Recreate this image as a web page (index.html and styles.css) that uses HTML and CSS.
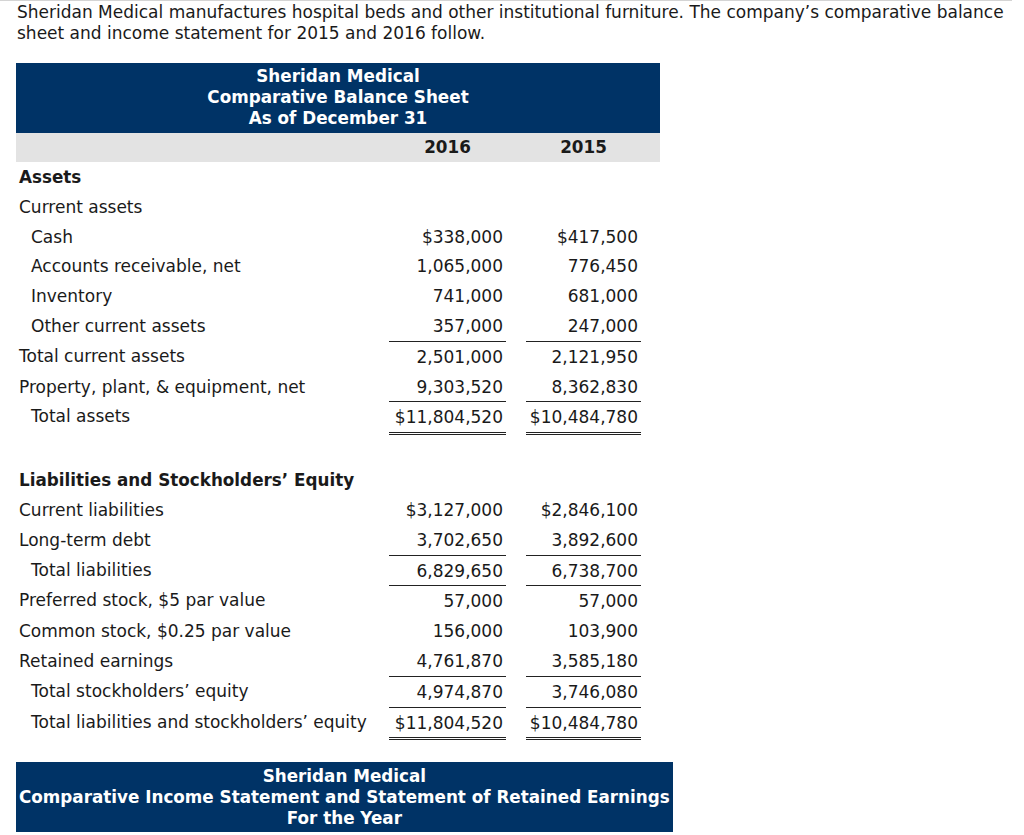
FILE: index.html
```html
<!DOCTYPE html>
<html lang="en">
<head>
<meta charset="utf-8">
<title>Sheridan Medical</title>
<link rel="stylesheet" href="styles.css">
</head>
<body>
<div class="page">
  <p class="intro">Sheridan Medical manufactures hospital beds and other institutional furniture. The company’s comparative balance sheet and income statement for 2015 and 2016 follow.</p>

  <section class="sheet">
    <div class="title-bar">
      <div>Sheridan Medical</div>
      <div>Comparative Balance Sheet</div>
      <div>As of December 31</div>
    </div>
    <div class="row years">
      <span></span><span class="val">2016</span><span></span><span class="val">2015</span><span></span>
    </div>

    <div class="row"><span class="label bold">Assets</span><span class="val"></span><span></span><span class="val"></span><span></span></div>
    <div class="row"><span class="label">Current assets</span><span class="val"></span><span></span><span class="val"></span><span></span></div>
    <div class="row"><span class="label sub">Cash</span><span class="val">$338,000</span><span></span><span class="val">$417,500</span><span></span></div>
    <div class="row"><span class="label sub">Accounts receivable, net</span><span class="val">1,065,000</span><span></span><span class="val">776,450</span><span></span></div>
    <div class="row"><span class="label sub">Inventory</span><span class="val">741,000</span><span></span><span class="val">681,000</span><span></span></div>
    <div class="row"><span class="label sub">Other current assets</span><span class="val">357,000</span><span></span><span class="val">247,000</span><span></span></div>
    <div class="row"><span class="label">Total current assets</span><span class="val rule">2,501,000</span><span></span><span class="val rule">2,121,950</span><span></span></div>
    <div class="row"><span class="label">Property, plant, &amp; equipment, net</span><span class="val">9,303,520</span><span></span><span class="val">8,362,830</span><span></span></div>
    <div class="row"><span class="label sub">Total assets</span><span class="val rule dbl">$11,804,520</span><span></span><span class="val rule dbl">$10,484,780</span><span></span></div>

    <div class="spacer"></div>

    <div class="row"><span class="label bold">Liabilities and Stockholders’ Equity</span><span class="val"></span><span></span><span class="val"></span><span></span></div>
    <div class="row"><span class="label">Current liabilities</span><span class="val">$3,127,000</span><span></span><span class="val">$2,846,100</span><span></span></div>
    <div class="row"><span class="label">Long-term debt</span><span class="val">3,702,650</span><span></span><span class="val">3,892,600</span><span></span></div>
    <div class="row"><span class="label sub">Total liabilities</span><span class="val rule">6,829,650</span><span></span><span class="val rule">6,738,700</span><span></span></div>
    <div class="row"><span class="label">Preferred stock, $5 par value</span><span class="val rule">57,000</span><span></span><span class="val rule">57,000</span><span></span></div>
    <div class="row"><span class="label">Common stock, $0.25 par value</span><span class="val">156,000</span><span></span><span class="val">103,900</span><span></span></div>
    <div class="row"><span class="label">Retained earnings</span><span class="val">4,761,870</span><span></span><span class="val">3,585,180</span><span></span></div>
    <div class="row"><span class="label sub">Total stockholders’ equity</span><span class="val rule">4,974,870</span><span></span><span class="val rule">3,746,080</span><span></span></div>
    <div class="row"><span class="label sub">Total liabilities and stockholders’ equity</span><span class="val rule dbl">$11,804,520</span><span></span><span class="val rule dbl">$10,484,780</span><span></span></div>
  </section>

  <section class="sheet income">
    <div class="title-bar">
      <div>Sheridan Medical</div>
      <div>Comparative Income Statement and Statement of Retained Earnings</div>
      <div>For the Year</div>
    </div>
  </section>
</div>
</body>
</html>
```

FILE: styles.css
```css
* { box-sizing: border-box; }

html, body {
  margin: 0;
  padding: 0;
  background: #ffffff;
}

body {
  font-family: "DejaVu Sans", Verdana, sans-serif;
  font-size: 17px;
  color: #1a1a1a;
}

.page {
  width: 1024px;
  padding: 0 6px 0 16px;
  min-height: 835px;
}

.intro {
  margin: 0 6px 19px -16px;
  padding: 1px 0 0 17px;
  border-top: 1px solid #d4d4d4;
  line-height: 21px;
}

.sheet {
  width: 644px;
}

.title-bar {
  background: #003366;
  color: #ffffff;
  font-weight: bold;
  font-size: 16.8px;
  text-align: center;
  line-height: 21px;
  padding: 3px 3px 4px;
}

.row {
  display: grid;
  grid-template-columns: 373px 117px 20px 115px 19px;
}

.row > span {
  line-height: 28.8px;
  min-height: 29.8px;
  padding-top: 1px;
  white-space: nowrap;
}

.years {
  background: #e3e3e3;
  font-weight: bold;
  font-size: 16.8px;
}

.years > span {
  line-height: 29px;
  min-height: 29px;
  padding-top: 0;
}

.years .val {
  text-align: center;
  padding-right: 0;
}

.label {
  padding-left: 3px;
}

.label.sub {
  padding-left: 15px;
}

.bold {
  font-weight: bold;
  font-size: 16.8px;
}

.val {
  text-align: right;
  padding-right: 3px;
}

.rule {
  border-top: 1px solid #222222;
}

.dbl {
  border-bottom: 3px double #222222;
}

.spacer {
  height: 30px;
}

.income {
  width: fit-content;
  margin-top: 22px;
}

.income .title-bar {
  padding: 4px 3px 3px;
}
```
